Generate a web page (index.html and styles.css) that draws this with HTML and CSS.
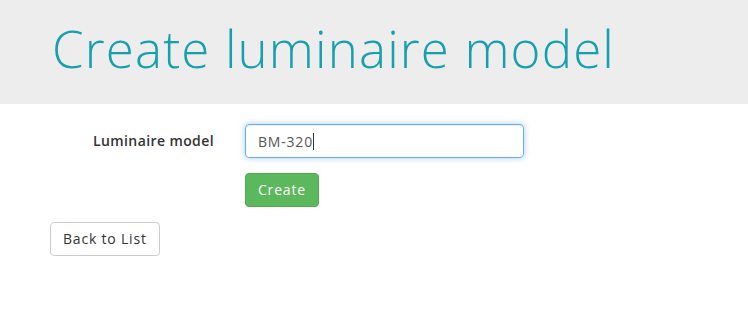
FILE: index.html
```html
<!DOCTYPE html>
<html>
<head>
<meta charset="utf-8">
<link rel="stylesheet" href="styles.css">
</head>
<body>
<header class="hero">
  <h1 class="title">Create luminaire model</h1>
</header>
<main class="content">
  <form class="form">
    <label class="label" for="model">Luminaire model</label>
    <div class="field"><span class="input" id="model">BM-320<span class="caret"></span></span></div>
    <div class="actions"><button type="button" class="btn btn-success">Create</button></div>
  </form>
  <div class="back"><a class="btn btn-default" href="#">Back to List</a></div>
</main>
</body>
</html>
```
FILE: styles.css
```css
* { box-sizing: border-box; }
html, body { margin: 0; padding: 0; background: #fff; }
body {
  font-family: "Open Sans", "Lato", sans-serif;
  font-size: 14px;
  letter-spacing: 0.4px;
  color: #333;
  width: 748px;
  height: 320px;
  overflow: hidden;
}
.hero {
  background: #ededed;
  height: 104px;
  padding: 16px 0 0 52px;
}
.title {
  margin: 0;
  font-family: "Open Sans", sans-serif;
  font-weight: 300;
  font-size: 51px;
  line-height: 64px;
  color: #169fae;
  letter-spacing: 1.15px;
}
.content {
  padding: 20px 0 0 50px;
}
.form {
  display: grid;
  grid-template-columns: 164px 279px;
  column-gap: 31px;
  row-gap: 15px;
}
.label {
  text-align: right;
  font-weight: 600;
  line-height: 34px;
  color: #333;
}
.input {
  display: flex;
  align-items: center;
  height: 34px;
  padding: 0 12px;
  border: 1px solid #66afe9;
  border-radius: 4px;
  box-shadow: inset 0 1px 1px rgba(0,0,0,.075), 0 0 6px rgba(102,175,233,.6);
  color: #555;
  font-size: 14px;
  letter-spacing: 0.8px;
}
.caret {
  display: inline-block;
  width: 1px;
  height: 17px;
  background: #333;
  margin-left: 0;
}
.actions { grid-column: 2; }
.btn {
  display: inline-block;
  height: 34px;
  line-height: 32px;
  padding: 0 12px;
  font-family: inherit;
  font-size: 14px;
  letter-spacing: 0.8px;
  border-radius: 4px;
  border: 1px solid transparent;
  text-decoration: none;
  cursor: pointer;
}
.btn-success {
  background: #5cb85c;
  border-color: #4cae4c;
  color: #fff;
}
.btn-default {
  background: #fff;
  border-color: #ccc;
  color: #333;
}
.back { margin-top: 15px; }
```
